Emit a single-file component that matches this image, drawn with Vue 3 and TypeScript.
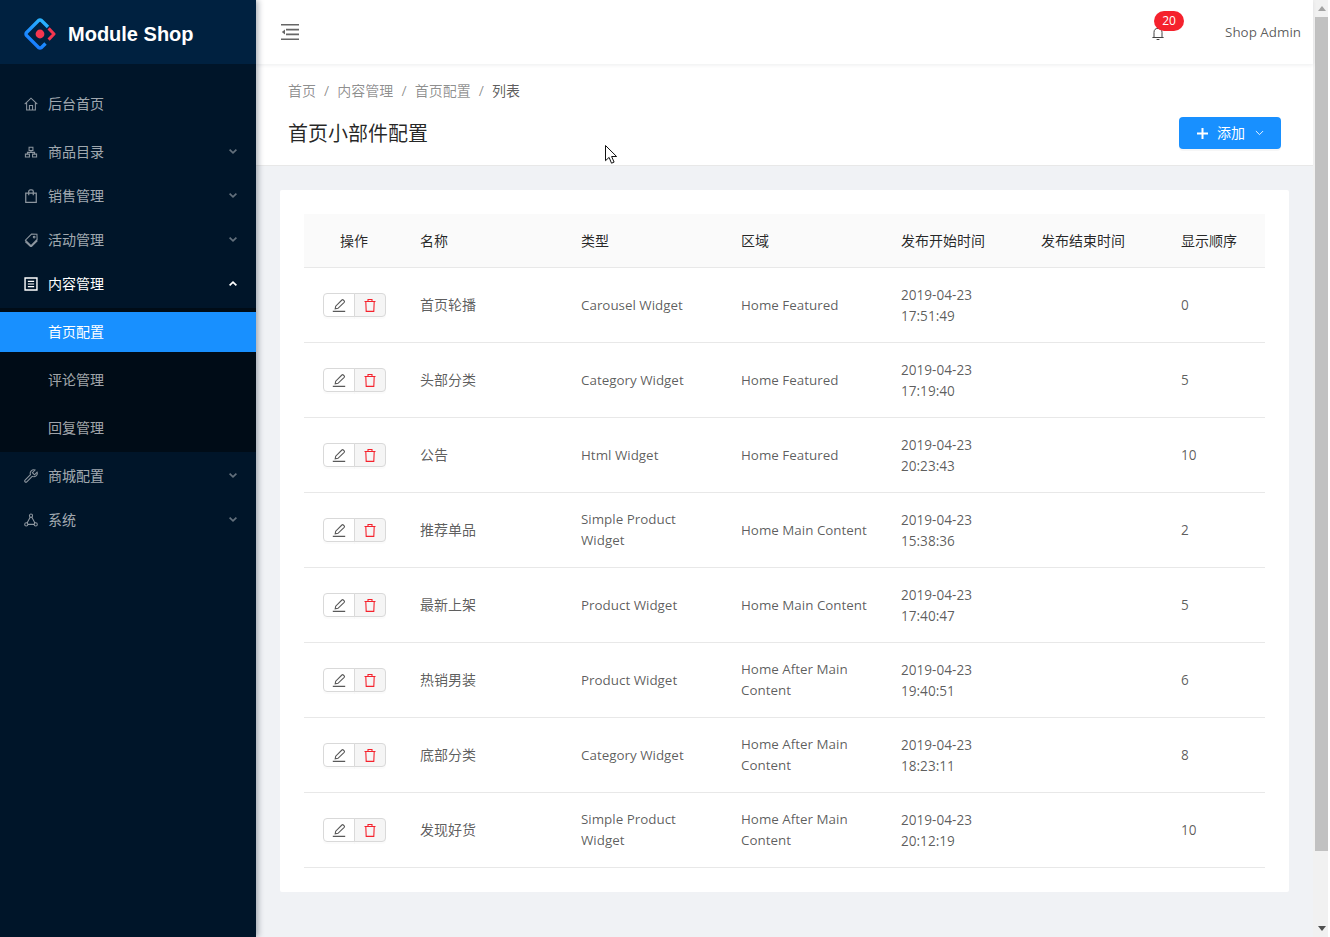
<script setup lang="ts">
interface MenuItem {
  label: string
  icon: string
  arrow?: boolean
  open?: boolean
  children?: { label: string; active?: boolean }[]
}

interface Widget {
  name: string
  type: string
  area: string
  date: string
  time: string
  order: number
}

const menu: MenuItem[] = [
  { label: '后台首页', icon: 'home' },
  { label: '商品目录', icon: 'cluster', arrow: true },
  { label: '销售管理', icon: 'bag', arrow: true },
  { label: '活动管理', icon: 'tag', arrow: true },
  {
    label: '内容管理',
    icon: 'profile',
    arrow: true,
    open: true,
    children: [{ label: '首页配置', active: true }, { label: '评论管理' }, { label: '回复管理' }]
  },
  { label: '商城配置', icon: 'tool', arrow: true },
  { label: '系统', icon: 'deploy', arrow: true }
]

const crumbs = ['首页', '内容管理', '首页配置']

const columns = ['操作', '名称', '类型', '区域', '发布开始时间', '发布结束时间', '显示顺序']

const widgets: Widget[] = [
  { name: '首页轮播', type: 'Carousel Widget', area: 'Home Featured', date: '2019-04-23', time: '17:51:49', order: 0 },
  { name: '头部分类', type: 'Category Widget', area: 'Home Featured', date: '2019-04-23', time: '17:19:40', order: 5 },
  { name: '公告', type: 'Html Widget', area: 'Home Featured', date: '2019-04-23', time: '20:23:43', order: 10 },
  { name: '推荐单品', type: 'Simple Product Widget', area: 'Home Main Content', date: '2019-04-23', time: '15:38:36', order: 2 },
  { name: '最新上架', type: 'Product Widget', area: 'Home Main Content', date: '2019-04-23', time: '17:40:47', order: 5 },
  { name: '热销男装', type: 'Product Widget', area: 'Home After Main Content', date: '2019-04-23', time: '19:40:51', order: 6 },
  { name: '底部分类', type: 'Category Widget', area: 'Home After Main Content', date: '2019-04-23', time: '18:23:11', order: 8 },
  { name: '发现好货', type: 'Simple Product Widget', area: 'Home After Main Content', date: '2019-04-23', time: '20:12:19', order: 10 }
]
</script>

<template>
  <div class="layout">
    <aside class="sider">
      <div class="logo">
        <svg class="logo-mark" viewBox="0 0 32 32" width="32" height="32" fill="none">
          <defs>
            <linearGradient id="logoBlue" x1="0.8" y1="0" x2="0.3" y2="1">
              <stop offset="0" stop-color="#2ab4ff" />
              <stop offset="1" stop-color="#1677ff" />
            </linearGradient>
          </defs>
          <path d="M24 9 17.5 2.5Q16 1.5 14.5 2.5L2.5 14.5Q1.5 16 2.5 17.5L14.5 29.5Q16 30.5 17.5 29.5L21.5 25.5" stroke="url(#logoBlue)" stroke-width="3.4" />
          <path d="M24.6 10.4 30 16 24.6 21.6" stroke="#f5364f" stroke-width="3" stroke-linejoin="round" />
          <circle cx="16" cy="16" r="4.4" fill="#f5364f" />
        </svg>
        <span class="logo-text">Module Shop</span>
      </div>
      <nav class="menu">
        <template v-for="item in menu" :key="item.label">
          <div class="menu-item" :class="{ open: item.open }">
            <svg class="menu-icon" viewBox="0 0 16 16" width="14" height="14" fill="none" stroke="currentColor" stroke-width="1.2">
              <template v-if="item.icon === 'home'">
                <path d="M.8 8.2 8 1.4l7.2 6.8M3 6.6v8.2h10V6.6M6.2 14.8V9.8h3.6v5" />
              </template>
              <template v-else-if="item.icon === 'cluster'">
                <path d="M5.8 2.6h4.4v3.6H5.8zM1.6 10.4h4.6v3.4H1.6zM9.8 10.4h4.6v3.4H9.8zM8 6.2v2.2H3.9v2M8 8.4h4.1v2" />
              </template>
              <template v-else-if="item.icon === 'bag'">
                <path d="M2 4.8h12v10.4H2zM5.4 7V2.8A1.8 1.8 0 0 1 7.2 1h1.6a1.8 1.8 0 0 1 1.8 1.8V7" stroke-width="1.4" />
              </template>
              <template v-else-if="item.icon === 'tag'">
                <path d="M8.6 1.2 14.8 1.4 15 7.4 8 14.4 1.6 8.2ZM1.4 9.8 8 16 15.4 8.8" />
                <circle cx="11.6" cy="4.6" r="1" />
              </template>
              <template v-else-if="item.icon === 'profile'">
                <path d="M1.2 1.2h13.6v13.6H1.2z" stroke-width="1.6" />
                <path d="M4.4 5h7.2M4.4 8h7.2M4.4 11h7.2" />
              </template>
              <template v-else-if="item.icon === 'tool'">
                <path d="M15 3.6 12 6.6 9.6 4.2 12.6 1.2A4 4 0 0 0 7.4 6.4L1.2 12.6a1.4 1.4 0 0 0 0 2 1.4 1.4 0 0 0 2 0l6.2-6.2a4 4 0 0 0 5.6-4.8Z" />
              </template>
              <template v-else>
                <circle cx="8" cy="3" r="1.8" />
                <circle cx="2.6" cy="13" r="1.8" />
                <circle cx="13.4" cy="13" r="1.8" />
                <path d="M7.2 4.6 3.5 11.4M8.8 4.6l3.7 6.8M4.4 13h7.2" />
              </template>
            </svg>
            <span class="menu-label">{{ item.label }}</span>
            <svg v-if="item.arrow" class="menu-arrow" viewBox="0 0 8 5" width="8" height="5" fill="none" stroke="currentColor" stroke-width="1.7">
              <path v-if="item.open" d="M.6 4.4 4 1.2l3.4 3.2" />
              <path v-else d="M.6.6 4 3.8 7.4.6" />
            </svg>
          </div>
          <div v-if="item.children" class="submenu">
            <div v-for="child in item.children" :key="child.label" class="submenu-item" :class="{ active: child.active }">
              {{ child.label }}
            </div>
          </div>
        </template>
      </nav>
    </aside>

    <main class="main">
      <header class="topbar">
        <svg class="fold" viewBox="0 0 18 16" width="18" height="16" fill="#666">
          <path d="M0 0h18v1.6H0zM5 4.8h13v1.6H5zM5 9.6h13v1.6H5zM0 14.4h18V16H0zM.8 8 4 5.6v4.8z" />
        </svg>
        <div class="bell">
          <svg viewBox="0 0 12 13" width="12" height="13" fill="none" stroke="#444" stroke-width="1">
            <path d="M.4 10.5h11.2M2 10.5V5.4a4 4 0 0 1 8 0v5.1M4.6 12.5h2.8" />
          </svg>
          <span class="badge">20</span>
        </div>
        <span class="user">Shop Admin</span>
      </header>

      <section class="page-head">
        <div class="crumbs">
          <template v-for="crumb in crumbs" :key="crumb">
            <span>{{ crumb }}</span>
            <span class="sep">/</span>
          </template>
          <span class="crumb-last">列表</span>
        </div>
        <div class="title-row">
          <h1>首页小部件配置</h1>
          <button class="add-btn" type="button">
            <svg class="add-plus" viewBox="0 0 11 11" width="11" height="11" fill="#fff">
              <path d="M4.5 0h2v4.5H11v2H6.5V11h-2V6.5H0v-2h4.5z" />
            </svg>
            <span class="add-text">添加</span>
            <svg viewBox="0 0 10 6" width="9" height="6" fill="none" stroke="#fff" stroke-width="1">
              <path d="M1 .8 5 4.8 9 .8" />
            </svg>
          </button>
        </div>
      </section>

      <section class="content">
        <div class="card">
          <table>
            <colgroup>
              <col style="width: 100px" />
              <col style="width: 161px" />
              <col style="width: 160px" />
              <col style="width: 160px" />
              <col style="width: 140px" />
              <col style="width: 140px" />
              <col style="width: 100px" />
            </colgroup>
            <thead>
              <tr>
                <th v-for="col in columns" :key="col">{{ col }}</th>
              </tr>
            </thead>
            <tbody>
              <tr v-for="row in widgets" :key="row.name">
                <td class="cell-actions">
                  <div class="btn-group">
                    <span class="act edit">
                      <svg viewBox="0 0 14 14" width="14" height="14" fill="none" stroke="#595959" stroke-width="1.1">
                        <path d="M.8 13.4h12.4M3.2 10.8l.5-2.6L9.9 2a1 1 0 0 1 1.4 0l.9.9a1 1 0 0 1 0 1.4L6 10.3z" />
                      </svg>
                    </span>
                    <span class="act del">
                      <svg viewBox="0 0 14 14" width="14" height="14" fill="none" stroke="#f5222d" stroke-width="1.1">
                        <path d="M1.5 3.5h11M2.8 3.5l.4 9.9h7.6l.4-9.9M5 3.5v-2h4v2" />
                      </svg>
                    </span>
                  </div>
                </td>
                <td>{{ row.name }}</td>
                <td class="latin">{{ row.type }}</td>
                <td class="latin">{{ row.area }}</td>
                <td class="digits stamp">{{ row.date }}<br />{{ row.time }}</td>
                <td></td>
                <td class="digits">{{ row.order }}</td>
              </tr>
            </tbody>
          </table>
        </div>
      </section>
    </main>

    <div class="scrollbar">
      <span class="arrow up"></span>
      <span class="thumb"></span>
      <span class="arrow down"></span>
    </div>

    <svg class="cursor" viewBox="0 0 13 20" width="13" height="20">
      <path d="M.5.5v15.2l3.6-3.3 2.4 5.8 2.6-1.1-2.5-5.6h5z" fill="#fff" stroke="#111" stroke-width="1" />
    </svg>
  </div>
</template>

<style>
html,
body {
  margin: 0;
  overflow: hidden;
  background: #fff;
}
</style>

<style scoped>
.layout {
  position: relative;
  display: flex;
  width: 1330px;
  height: 937px;
  overflow: hidden;
  font-family: "Open Sans", "Noto Sans CJK SC", sans-serif;
  font-size: 14px;
  color: rgba(0, 0, 0, 0.65);
}

.sider {
  flex: none;
  width: 256px;
  background: #001529;
  box-shadow: 2px 0 6px rgba(0, 21, 41, 0.35);
  z-index: 2;
}

.logo {
  display: flex;
  align-items: center;
  gap: 12px;
  box-sizing: border-box;
  height: 64px;
  padding: 4px 0 0 24px;
  background: #002140;
}

.logo-text {
  font-family: "Liberation Sans", sans-serif;
  font-size: 20px;
  font-weight: 700;
  color: #fff;
}

.menu {
  padding: 16px 0;
  color: rgba(255, 255, 255, 0.65);
}

.menu-item {
  display: flex;
  align-items: center;
  height: 40px;
  margin: 4px 0;
  padding: 0 19px 0 24px;
}

.menu-item:first-child {
  margin-bottom: 8px;
}

.menu-item.open {
  color: #fff;
}

.menu-icon {
  flex: none;
  margin-right: 10px;
  opacity: 0.85;
}

.menu-item.open .menu-icon {
  opacity: 1;
}

.menu-label {
  flex: 1;
  line-height: 40px;
}

.menu-arrow {
  flex: none;
  margin-bottom: 2px;
  opacity: 0.6;
}

.menu-item.open .menu-arrow {
  opacity: 1;
}

.submenu {
  padding: 4px 0;
  background: #000c17;
  margin-bottom: 4px;
}

.submenu-item {
  height: 40px;
  line-height: 40px;
  padding-left: 48px;
  margin-bottom: 8px;
}

.submenu-item:last-child {
  margin-bottom: 0;
}

.submenu-item.active {
  background: #1890ff;
  color: #fff;
}

.main {
  flex: none;
  width: 1057px;
  display: flex;
  flex-direction: column;
  background: #f0f2f5;
}

.topbar {
  flex: none;
  display: flex;
  align-items: center;
  height: 64px;
  padding-left: 25px;
  background: #fff;
  box-shadow: 0 1px 4px rgba(0, 21, 41, 0.08);
  position: relative;
  z-index: 1;
}

.fold {
  margin-right: auto;
}

.bell {
  position: relative;
  display: flex;
  margin: 2px 61px 0 0;
}

.badge {
  position: absolute;
  left: 2px;
  top: -16px;
  min-width: 30px;
  height: 20px;
  border-radius: 10px;
  background: #f5222d;
  color: #fff;
  font-size: 12px;
  line-height: 20px;
  text-align: center;
}

.user {
  margin-right: 12px;
  font-size: 13.4px;
  line-height: 20px;
}

.page-head {
  flex: none;
  height: 102px;
  box-sizing: border-box;
  padding: 16px 32px 0;
  background: #fff;
  border-bottom: 1px solid #e8e8e8;
}

.crumbs {
  display: flex;
  line-height: 21px;
  color: rgba(0, 0, 0, 0.45);
}

.sep {
  flex: none;
  width: 21.34px;
  text-align: center;
}

.crumb-last {
  color: rgba(0, 0, 0, 0.65);
}

.title-row {
  display: flex;
  align-items: center;
  justify-content: space-between;
  margin-top: 16px;
}

h1 {
  margin: 0;
  padding-top: 2px;
  font-size: 20px;
  font-weight: 400;
  line-height: 30px;
  color: rgba(0, 0, 0, 0.85);
}

.add-btn {
  display: flex;
  align-items: center;
  width: 102px;
  height: 32px;
  padding: 0 0 0 18px;
  border: 0;
  border-radius: 4px;
  background: #1890ff;
  color: #fff;
  font: inherit;
  box-shadow: 0 2px 0 rgba(0, 0, 0, 0.035);
}

.add-plus {
  margin-right: 9px;
}

.add-text {
  margin-right: 10px;
  line-height: 30px;
}

.content {
  flex: 1;
  padding: 24px;
}

.card {
  padding: 24px;
  background: #fff;
  border-radius: 2px;
}

table {
  width: 961px;
  border-collapse: collapse;
  table-layout: fixed;
}

th {
  height: 53px;
  padding: 0 16px;
  box-sizing: border-box;
  background: #fafafa;
  border-bottom: 1px solid #e8e8e8;
  font-weight: 400;
  text-align: left;
  color: rgba(0, 0, 0, 0.85);
}

th:first-child {
  text-align: center;
}

td {
  height: 75px;
  padding: 0 16px 1px;
  box-sizing: border-box;
  border-bottom: 1px solid #e8e8e8;
  line-height: 21px;
}

.cell-actions {
  padding-bottom: 0;
}

.latin {
  padding: 1px 16px 0;
  font-size: 13.4px;
}

.digits {
  font-size: 13.6px;
}

.stamp {
  padding: 1px 16px 0;
}

.btn-group {
  display: flex;
  justify-content: center;
}

.act {
  display: flex;
  align-items: center;
  justify-content: center;
  box-sizing: border-box;
  width: 32px;
  height: 24px;
  border: 1px solid #d9d9d9;
  box-shadow: 0 2px 0 rgba(0, 0, 0, 0.015);
}

.edit {
  border-radius: 4px 0 0 4px;
}

.del {
  margin-left: -1px;
  border-radius: 0 4px 4px 0;
  background: #f5f5f5;
}

.scrollbar {
  flex: none;
  display: flex;
  flex-direction: column;
  align-items: center;
  box-sizing: border-box;
  width: 15px;
  padding-left: 2px;
  background: #f1f1f1;
}

.arrow {
  flex: none;
  width: 0;
  height: 0;
  margin: 6px 0;
  border-left: 4px solid transparent;
  border-right: 4px solid transparent;
}

.arrow.up {
  border-bottom: 5px solid #a3a3a3;
}

.arrow.down {
  margin-top: auto;
  border-top: 5px solid #505050;
}

.thumb {
  width: 100%;
  height: 834px;
  background: #c1c1c1;
}

.cursor {
  position: absolute;
  left: 605px;
  top: 145px;
  z-index: 3;
}
</style>
